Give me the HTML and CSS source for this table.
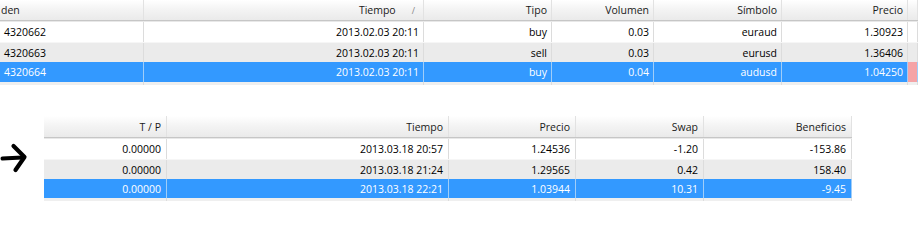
FILE: index.html
```html
<!DOCTYPE html>
<html>
<head>
<meta charset="utf-8">
<link rel="stylesheet" href="styles.css">
</head>
<body>
<div class="page">
  <div class="top-clip">
    <div class="grid top">
      <div class="row head">
        <div class="cell left first-head">den</div>
        <div class="cell">Tiempo<span class="sort">/</span></div>
        <div class="cell">Tipo</div>
        <div class="cell">Volumen</div>
        <div class="cell">Símbolo</div>
        <div class="cell">Precio</div>
        <div class="cell"></div>
      </div>
      <div class="row">
        <div class="cell left">4320662</div>
        <div class="cell">2013.02.03 20:11</div>
        <div class="cell">buy</div>
        <div class="cell">0.03</div>
        <div class="cell">euraud</div>
        <div class="cell">1.30923</div>
        <div class="cell"></div>
      </div>
      <div class="row alt">
        <div class="cell left">4320663</div>
        <div class="cell">2013.02.03 20:11</div>
        <div class="cell">sell</div>
        <div class="cell">0.03</div>
        <div class="cell">eurusd</div>
        <div class="cell">1.36406</div>
        <div class="cell"></div>
      </div>
      <div class="row sel">
        <div class="cell left">4320664</div>
        <div class="cell">2013.02.03 20:11</div>
        <div class="cell">buy</div>
        <div class="cell">0.04</div>
        <div class="cell">audusd</div>
        <div class="cell">1.04250</div>
        <div class="cell pink"></div>
      </div>
      <div class="row strip">
        <div class="cell"></div><div class="cell"></div><div class="cell"></div><div class="cell"></div><div class="cell"></div><div class="cell"></div><div class="cell"></div>
      </div>
    </div>
  </div>

  <div class="bottom-area">
    <div class="arrow-col">
      <svg class="arrow" width="30" height="32" viewBox="0 0 30 32">
        <path d="M2.5 16.5 Q12 15.8 22.5 15.5" fill="none" stroke="#000" stroke-width="4" stroke-linecap="round"/>
        <path d="M13.5 4 L24.5 15 L15.5 28" fill="none" stroke="#000" stroke-width="4.2" stroke-linecap="round" stroke-linejoin="round"/>
      </svg>
    </div>
    <div class="grid bottom">
      <div class="row head">
        <div class="cell">T / P</div>
        <div class="cell">Tiempo</div>
        <div class="cell">Precio</div>
        <div class="cell">Swap</div>
        <div class="cell">Beneficios</div>
      </div>
      <div class="row">
        <div class="cell">0.00000</div>
        <div class="cell">2013.03.18 20:57</div>
        <div class="cell">1.24536</div>
        <div class="cell">-1.20</div>
        <div class="cell">-153.86</div>
      </div>
      <div class="row alt">
        <div class="cell">0.00000</div>
        <div class="cell">2013.03.18 21:24</div>
        <div class="cell">1.29565</div>
        <div class="cell">0.42</div>
        <div class="cell">158.40</div>
      </div>
      <div class="row sel">
        <div class="cell">0.00000</div>
        <div class="cell">2013.03.18 22:21</div>
        <div class="cell">1.03944</div>
        <div class="cell">10.31</div>
        <div class="cell">-9.45</div>
      </div>
      <div class="row strip">
        <div class="cell"></div><div class="cell"></div><div class="cell"></div><div class="cell"></div><div class="cell"></div>
      </div>
    </div>
  </div>
</div>
</body>
</html>
```

FILE: styles.css
```css
*, *::before, *::after {
  box-sizing: border-box;
}
html, body {
  margin: 0;
  padding: 0;
  background: #fff;
  width: 918px;
  height: 248px;
  overflow: hidden;
}
.page {
  font-family: "Open Sans", "Noto Sans", sans-serif;
  font-size: 10.5px;
  color: #000;
}
.top-clip {
  width: 918px;
  overflow: hidden;
}
.grid .row {
  display: grid;
  height: 20px;
}
.top {
  margin-left: -16px;
}
.top .row {
  grid-template-columns: 160px 280px 128px 102px 128px 126px 10px;
}
.bottom .row {
  grid-template-columns: 123px 282px 127px 128px 148px;
}
.cell {
  display: flex;
  align-items: center;
  justify-content: flex-end;
  padding: 0 4px;
  border-right: 1px solid #dcdcdc;
  white-space: nowrap;
  overflow: hidden;
}
.cell.left {
  justify-content: flex-start;
  padding-left: 20px;
}
.row.head .cell.first-head {
  padding-left: 17px;
}
.row.head {
  background: linear-gradient(#ffffff, #f4f4f4 45%, #eaeaea);
  border-bottom: 1px solid #c6c6c6;
  box-shadow: 0 1px 0 #e8e8e8;
  margin-bottom: 1px;
  color: #1a1a1a;
}
.row.head .cell {
  border-right: 1px solid #e2e2e2;
}
.top .row.head {
  height: 21px;
}
.row.alt {
  background: #ebebeb;
  border-top: 1px solid #f6f6f6;
}
.row.sel {
  background: #3399ff;
  color: #fff;
}
.row.sel .cell {
  border-right-color: #a0cdf8;
}
.cell.pink {
  background: #f5a3a6;
}
.grid .row.strip {
  height: 3px;
  background: #efefef;
}
.row.strip .cell {
  padding: 0;
}
.sort {
  display: inline-block;
  margin-left: 16px;
  margin-right: 4px;
  color: #888;
  font-size: 9px;
}
.bottom-area {
  display: flex;
  margin-top: 31px;
}
.arrow-col {
  width: 44px;
  padding-top: 26px;
}
.arrow {
  display: block;
}
.bottom .row.head {
  height: 22px;
}
.bottom .row.sel {
  height: 19px;
}
.bottom .cell {
  padding-right: 5px;
}
```
